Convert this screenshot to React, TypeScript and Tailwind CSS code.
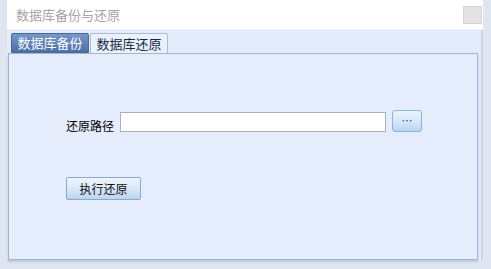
import React from "react";

const font = { fontFamily: '"Noto Sans CJK SC", "Liberation Sans", sans-serif' };

const App: React.FC = () => {
  return (
    <div
      className="w-[491px] h-[269px] bg-[#dfe6f2] pl-[7px] pr-[8px] pb-[9px] flex flex-col"
      style={font}
    >
      {/* title bar */}
      <div className="h-[30px] bg-white flex items-center justify-between pl-[9px] border-b border-[#eef1f6]">
        <span className="text-[13px] text-[#a4a4a4] leading-none">数据库备份与还原</span>
        <div className="w-[19px] h-[18px] mr-[1px] bg-[#e3e3e3] border border-[#d6d6d6]" />
      </div>

      {/* body */}
      <div className="flex-1 flex flex-col bg-[#e4ebfb] pl-[1px] pr-[3px] border-r-[2px] border-[#cbd6e8]">
        <div className="flex items-end h-[23px] pl-[3px] gap-[1px]">
          <div className="w-[78px] h-[20px] rounded-t-[2px] bg-gradient-to-b from-[#7697c9] to-[#4b6fa6] border border-[#48699b] text-white text-[13px] leading-[18px] text-center">
            数据库备份
          </div>
          <div className="w-[78px] h-[20px] rounded-t-[2px] bg-[#e9f1fd] border border-b-0 border-[#a8bbd7] text-[#1a2840] text-[13px] leading-[19px] text-center">
            数据库还原
          </div>
        </div>

        <div className="flex-1 border border-[#a3b4cc] bg-[#e5ecfc] shadow-[0_2px_2px_#b7c6dc] pl-[57px] pt-[56px] flex flex-col">
          <div className="flex items-center h-[22px]">
            <span className="text-[12px] text-black w-[54px] pt-[10px]">还原路径</span>
            <div className="w-[266px] h-[20px] bg-white border border-[#a9b0b8] mt-[2px]" />
            <button className="ml-[6px] w-[30px] h-[22px] rounded-[3px] border border-[#8fb2d9] bg-gradient-to-b from-[#eaf4fd] via-[#d6e8f8] to-[#b8d5f2] flex items-center justify-center text-[#2b4a78] text-[11px] leading-none pb-[1px]">
              …
            </button>
          </div>

          <button className="mt-[45px] w-[75px] h-[23px] rounded-[2px] border border-[#8aa9cd] bg-gradient-to-b from-[#eef5fc] via-[#d9e9f8] to-[#b9d5ef] text-[12px] text-[#111] leading-none">
            执行还原
          </button>
        </div>
      </div>
    </div>
  );
};

export default App;
